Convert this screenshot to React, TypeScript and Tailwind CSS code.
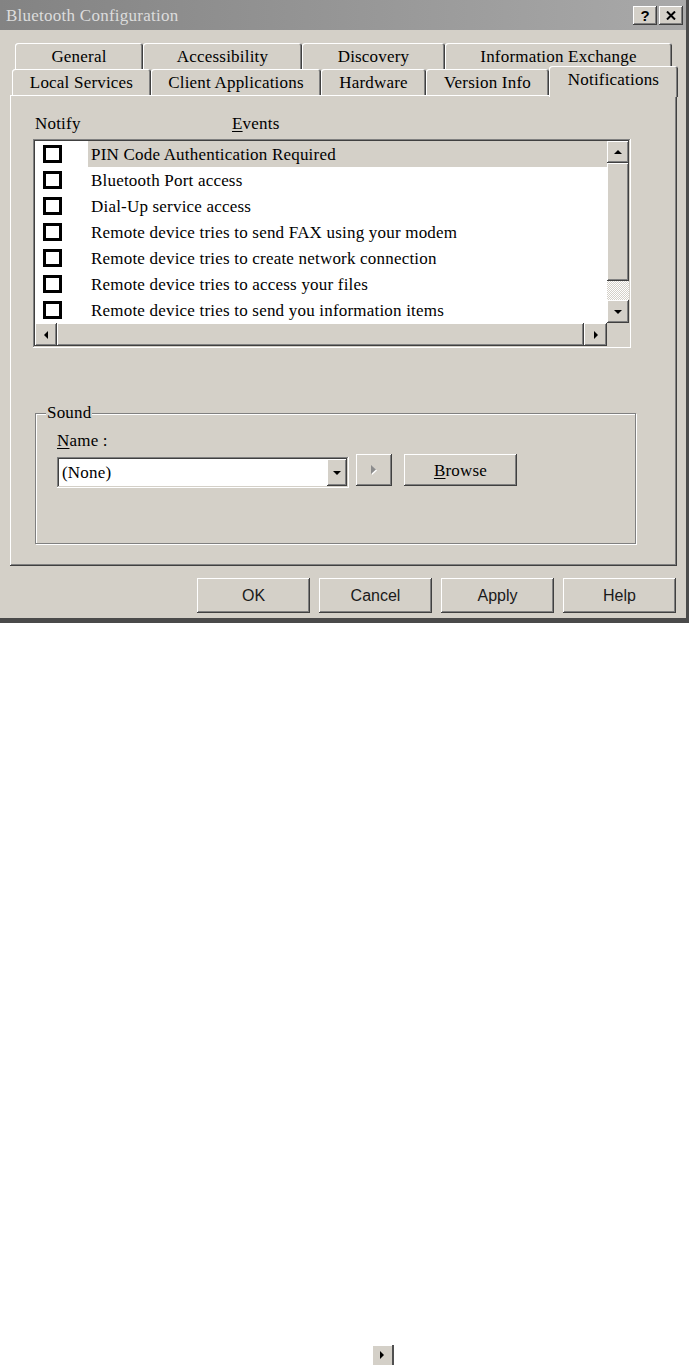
import React from "react";

const raised =
  "shadow-[inset_-1px_-1px_#404040,inset_1px_1px_#ffffff,inset_-2px_-2px_#808080,inset_2px_2px_#d4d0c8]";
const sunken =
  "shadow-[inset_-1px_-1px_#ffffff,inset_1px_1px_#808080,inset_-2px_-2px_#d4d0c8,inset_2px_2px_#404040]";

function Tri({ dir, color = "#000000" }: { dir: "up" | "down" | "left" | "right"; color?: string }) {
  const pts =
    dir === "up"
      ? "0,4 8,4 4,0"
      : dir === "down"
      ? "0,0 8,0 4,4"
      : dir === "left"
      ? "4,0 4,8 0,4"
      : "0,0 0,8 4,4";
  const w = dir === "up" || dir === "down" ? 8 : 4;
  const h = dir === "up" || dir === "down" ? 4 : 8;
  return (
    <svg width={w} height={h} viewBox={`0 0 ${w} ${h}`}>
      <polygon points={pts} fill={color} />
    </svg>
  );
}

function Tab({ label, w, h = "h-[26px]" }: { label: string; w: string; h?: string }) {
  return (
    <div
      className={`${w} ${h} shrink-0 rounded-t-[3px] bg-[#d4d0c8] shadow-[inset_1px_1px_#ffffff,inset_-1px_0_#404040,inset_-2px_0_#808080] flex items-center justify-center text-[17px] tracking-[0.2px] leading-none`}
    >
      {label}
    </div>
  );
}

const rows = [
  "PIN Code Authentication Required",
  "Bluetooth Port access",
  "Dial-Up service access",
  "Remote device tries to send FAX using your modem",
  "Remote device tries to create network connection",
  "Remote device tries to access your files",
  "Remote device tries to send you information items",
];

function ScrollBtn({ dir, h = "h-[22px]" }: { dir: "up" | "down" | "left" | "right"; h?: string }) {
  return (
    <div className={`${h} w-full flex items-center justify-center bg-[#d4d0c8] ${raised}`}>
      <Tri dir={dir} />
    </div>
  );
}

function DlgButton({ children }: { children: React.ReactNode }) {
  return (
    <div
      className={`w-[113px] h-[35px] flex items-center justify-center bg-[#d4d0c8] text-[16px] text-[#1a1a1a] font-['Liberation_Sans',Arial,sans-serif] ${raised}`}
    >
      {children}
    </div>
  );
}

export default function App() {
  return (
    <div className="w-[693px] min-h-[1365px] bg-white font-['Liberation_Serif','Times_New_Roman',serif] text-black overflow-hidden">
      <div className="w-[689px] bg-[#d4d0c8] border-r-[3px] border-b-[5px] border-[#4a4a4a]">
        {/* Title bar */}
        <div className="h-[30px] flex items-center justify-between bg-[linear-gradient(90deg,#838383,#a9a9a9)] pl-[6px] pr-[3px]">
          <span className="text-[17px] tracking-[0.25px] text-[#dcdcdc] leading-none">Bluetooth Configuration</span>
          <div className="flex gap-[2px]">
            <div className={`w-[24px] h-[19px] flex items-center justify-center bg-[#d4d0c8] ${raised} font-['Liberation_Sans',Arial,sans-serif] font-bold text-[15px] leading-none`}>
              ?
            </div>
            <div className={`w-[24px] h-[19px] flex items-center justify-center bg-[#d4d0c8] ${raised}`}>
              <svg width="10" height="9" viewBox="0 0 10 9">
                <path d="M1 0.5 L9 8.5 M9 0.5 L1 8.5" stroke="#000" strokeWidth="2" />
              </svg>
            </div>
          </div>
        </div>

        {/* Tabs */}
        <div className="pt-[13px]">
          <div className="flex pl-[15px] h-[26px]">
            <Tab label="General" w="w-[128px]" />
            <Tab label="Accessibility" w="w-[159px]" />
            <Tab label="Discovery" w="w-[143px]" />
            <Tab label="Information Exchange" w="w-[227px]" />
          </div>
          <div className="flex items-end pl-[12px] h-[29px] -mt-[3px]">
            <Tab label="Local Services" w="w-[139px]" />
            <Tab label="Client Applications" w="w-[170px]" />
            <Tab label="Hardware" w="w-[105px]" />
            <Tab label="Version Info" w="w-[123px]" />
            <div className="relative z-10 -mb-[2px] w-[129px] h-[31px] shrink-0 rounded-t-[3px] bg-[#d4d0c8] shadow-[inset_1px_1px_#ffffff,inset_-1px_0_#404040,inset_-2px_0_#808080] flex justify-center pt-[5px] text-[17px] tracking-[0.2px] leading-[18px]">
              Notifications
            </div>
          </div>
        </div>

        {/* Panel */}
        <div className={`ml-[10px] w-[667px] h-[471px] flex flex-col ${raised}`}>
          <div className="mt-[19px] h-[18px] flex items-center pl-[25px] text-[17px] tracking-[0.2px] leading-none">
            <span className="w-[197px]">Notify</span>
            <span>
              <span className="underline underline-offset-2">E</span>vents
            </span>
          </div>

          {/* List box */}
          <div className={`ml-[23px] mt-[7px] w-[598px] h-[209px] p-[2px] bg-white ${sunken} flex flex-col`}>
            <div className="flex h-[182px]">
              <div className="flex-1 flex flex-col">
                {rows.map((r, i) => (
                  <div key={r} className="h-[26px] flex items-center">
                    <div className="ml-[8px] w-[19px] h-[18px] border-[3px] border-black bg-white shrink-0" />
                    <div
                      className={`ml-[26px] flex-1 h-full flex items-center pl-[3px] text-[17px] tracking-[0.2px] leading-none whitespace-nowrap ${
                        i === 0 ? "bg-[#d4d0c8]" : ""
                      }`}
                    >
                      {r}
                    </div>
                  </div>
                ))}
              </div>
              <div className="w-[22px] flex flex-col">
                <ScrollBtn dir="up" />
                <div className={`h-[118px] bg-[#d4d0c8] ${raised}`} />
                <div className="flex-1 [background-image:repeating-conic-gradient(#d4d0c8_0%_25%,#ffffff_0%_50%)] [background-size:2px_2px]" />
                <ScrollBtn dir="down" h="h-[23px]" />
              </div>
            </div>
            <div className="flex h-[23px]">
              <div className="w-[22px]">
                <ScrollBtn dir="left" h="h-[23px]" />
              </div>
              <div className={`flex-1 bg-[#d4d0c8] ${raised}`} />
              <div className="w-[23px]">
                <ScrollBtn dir="right" h="h-[23px]" />
              </div>
              <div className="w-[22px] bg-[#d4d0c8]" />
            </div>
          </div>

          {/* Sound group */}
          <div className="ml-[25px] mt-[65px] w-[601px] h-[131px] border border-[#808080] shadow-[1px_1px_#ffffff,inset_1px_1px_#ffffff] flex flex-col">
            <div className="-mt-[10px] ml-[10px] px-[1px] w-fit h-[18px] bg-[#d4d0c8] text-[17px] tracking-[0.2px] leading-[18px]">
              Sound
            </div>
            <div className="mt-[10px] ml-[21px] h-[18px] text-[17px] tracking-[0.2px] leading-[18px]">
              <span className="underline underline-offset-2">N</span>ame :
            </div>
            <div className="mt-[4px] flex items-start">
              <div className={`ml-[21px] mt-[3px] w-[292px] h-[31px] p-[2px] bg-white ${sunken} flex`}>
                <div className="flex-1 flex items-center pl-[3px] text-[17px] tracking-[0.2px] leading-none">(None)</div>
                <div className={`w-[20px] h-full flex items-center justify-center bg-[#d4d0c8] ${raised}`}>
                  <Tri dir="down" />
                </div>
              </div>
              <div className={`ml-[7px] w-[36px] h-[32px] flex items-center justify-center bg-[#d4d0c8] ${raised}`}>
                <svg width="7" height="11" viewBox="0 0 7 11">
                  <polygon points="1,1 1,10 6,5.5" fill="#ffffff" />
                  <polygon points="0,0 0,9 5,4.5" fill="#8c8c8c" />
                </svg>
              </div>
              <div className={`ml-[12px] w-[113px] h-[32px] flex items-center justify-center bg-[#d4d0c8] ${raised} text-[17px] tracking-[0.2px] leading-none`}>
                <span>
                  <span className="underline underline-offset-2">B</span>rowse
                </span>
              </div>
            </div>
          </div>
        </div>

        {/* Dialog buttons */}
        <div className="mt-[12px] pb-[5px] pr-[10px] flex justify-end gap-[9px]">
          <DlgButton>OK</DlgButton>
          <DlgButton>Cancel</DlgButton>
          <DlgButton>Apply</DlgButton>
          <DlgButton>Help</DlgButton>
        </div>
      </div>

      {/* Stray button at bottom */}
      <div className="mt-[722px] ml-[372px] w-[22px] h-[20px] bg-[#d4d0c8] border-r-2 border-[#505050] shadow-[inset_1px_1px_#ffffff] flex items-center justify-center">
        <Tri dir="right" />
      </div>
    </div>
  );
}
